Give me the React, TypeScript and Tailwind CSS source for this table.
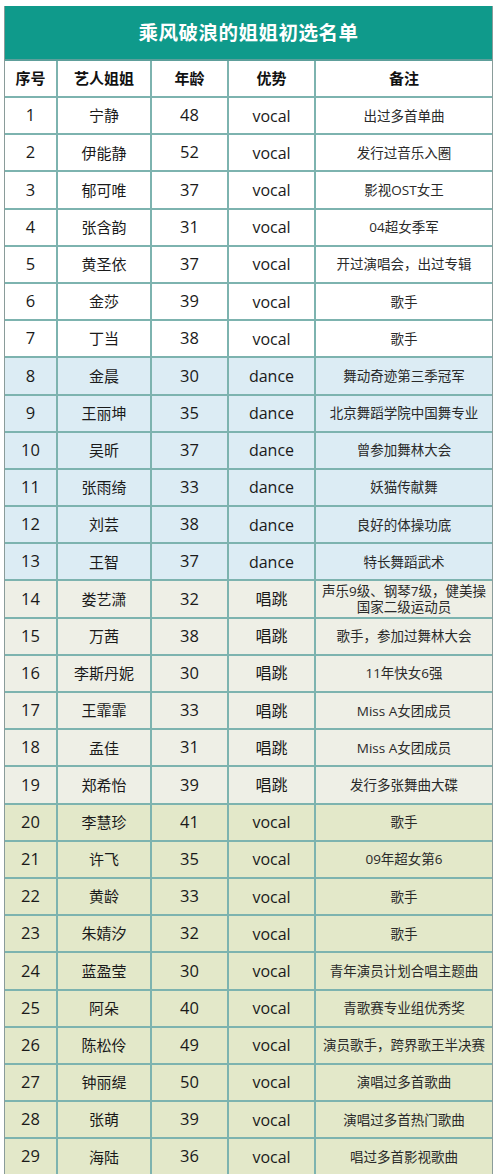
import React from 'react'

type Row = [number, string, number, string, string]

const rows: Row[] = [
  [1, '宁静', 48, 'vocal', '出过多首单曲'],
  [2, '伊能静', 52, 'vocal', '发行过音乐入圈'],
  [3, '郁可唯', 37, 'vocal', '影视OST女王'],
  [4, '张含韵', 31, 'vocal', '04超女季军'],
  [5, '黄圣依', 37, 'vocal', '开过演唱会，出过专辑'],
  [6, '金莎', 39, 'vocal', '歌手'],
  [7, '丁当', 38, 'vocal', '歌手'],
  [8, '金晨', 30, 'dance', '舞动奇迹第三季冠军'],
  [9, '王丽坤', 35, 'dance', '北京舞蹈学院中国舞专业'],
  [10, '吴昕', 37, 'dance', '曾参加舞林大会'],
  [11, '张雨绮', 33, 'dance', '妖猫传献舞'],
  [12, '刘芸', 38, 'dance', '良好的体操功底'],
  [13, '王智', 37, 'dance', '特长舞蹈武术'],
  [14, '娄艺潇', 32, '唱跳', '声乐9级、钢琴7级，健美操\n国家二级运动员'],
  [15, '万茜', 38, '唱跳', '歌手，参加过舞林大会'],
  [16, '李斯丹妮', 30, '唱跳', '11年快女6强'],
  [17, '王霏霏', 33, '唱跳', 'Miss A女团成员'],
  [18, '孟佳', 31, '唱跳', 'Miss A女团成员'],
  [19, '郑希怡', 39, '唱跳', '发行多张舞曲大碟'],
  [20, '李慧珍', 41, 'vocal', '歌手'],
  [21, '许飞', 35, 'vocal', '09年超女第6'],
  [22, '黄龄', 33, 'vocal', '歌手'],
  [23, '朱婧汐', 32, 'vocal', '歌手'],
  [24, '蓝盈莹', 30, 'vocal', '青年演员计划合唱主题曲'],
  [25, '阿朵', 40, 'vocal', '青歌赛专业组优秀奖'],
  [26, '陈松伶', 49, 'vocal', '演员歌手，跨界歌王半决赛'],
  [27, '钟丽缇', 50, 'vocal', '演唱过多首歌曲'],
  [28, '张萌', 39, 'vocal', '演唱过多首热门歌曲'],
  [29, '海陆', 36, 'vocal', '唱过多首影视歌曲'],
]

function rowBg(n: number) {
  if (n <= 7) return 'bg-white'
  if (n <= 13) return 'bg-[#dcecf4]'
  if (n <= 19) return 'bg-[#eeefe6]'
  return 'bg-[#e3e8c9]'
}

const font = { fontFamily: '"Open Sans", "Noto Sans CJK SC", sans-serif' }

export default function App() {
  return (
    <div className="min-h-[1174px] bg-white pt-[6px] pl-[4px] text-[#1a1a1a]" style={font}>
      <div className="w-[489px] border-x border-[#8a9c9a]">
        <div className="h-[55px] bg-[#0f9a8b] flex items-center justify-center text-white text-[19.5px] font-bold tracking-[0.5px] border-b-2 border-[#5e9f9b]">
          乘风破浪的姐姐初选名单
        </div>

        {/* header */}
        <div className="flex h-[37px] bg-white border-b-2 border-[#7db3af] text-[15px] font-bold text-[#111]">
          <div className="w-[53px] flex items-center justify-center border-r-2 border-[#7db3af]">序号</div>
          <div className="w-[94px] flex items-center justify-center border-r-2 border-[#7db3af]">艺人姐姐</div>
          <div className="w-[77px] flex items-center justify-center border-r-2 border-[#7db3af]">年龄</div>
          <div className="w-[87px] flex items-center justify-center border-r-2 border-[#7db3af]">优势</div>
          <div className="flex-1 flex items-center justify-center">备注</div>
        </div>

        {rows.map(([n, name, age, skill, note]) => (
          <div key={n} className={`flex h-[37.2px] border-b-2 border-[#7db3af] text-[15px] ${rowBg(n)}`}>
            <div className="w-[53px] flex items-center justify-center border-r-2 border-[#7db3af] text-[16.5px]">{n}</div>
            <div className="w-[94px] flex items-center justify-center border-r-2 border-[#7db3af]">{name}</div>
            <div className="w-[77px] flex items-center justify-center border-r-2 border-[#7db3af] text-[16.5px]">{age}</div>
            <div className="w-[87px] flex items-center justify-center border-r-2 border-[#7db3af] text-[16px]">{skill}</div>
            <div className="flex-1 flex items-center justify-center text-center text-[13.5px] leading-[16px] whitespace-pre-line text-[#2a2a2a]">
              {note}
            </div>
          </div>
        ))}
      </div>
    </div>
  )
}
